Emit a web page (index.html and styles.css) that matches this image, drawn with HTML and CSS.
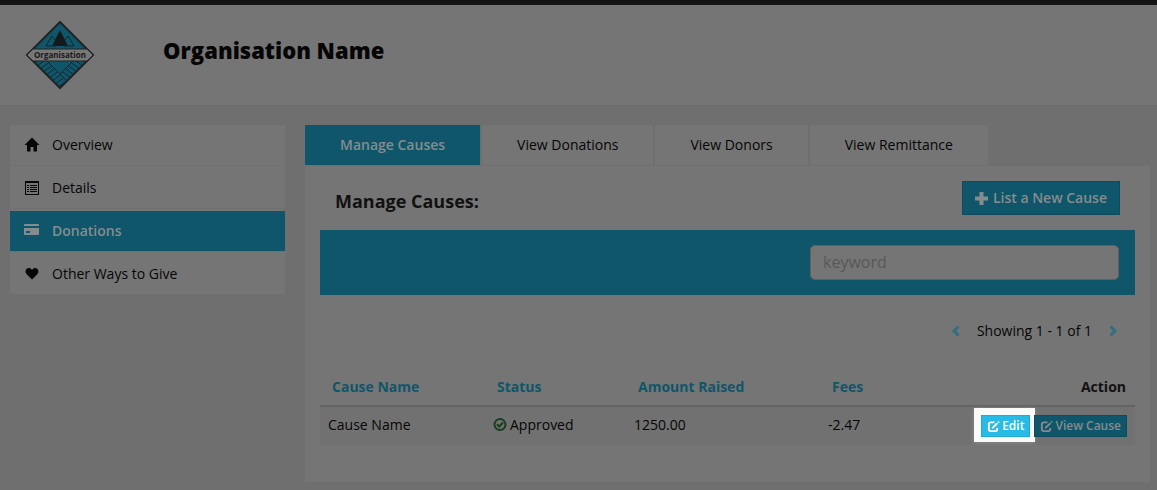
FILE: index.html
```html
<!DOCTYPE html>
<html lang="en">
<head>
<meta charset="utf-8">
<title>Organisation Name – Manage Causes</title>
<link rel="stylesheet" href="styles.css">
</head>
<body>
<svg class="symbols" aria-hidden="true">
  <symbol id="edit" viewBox="0 0 14 14"><path d="M8 2.500H4Q2 2.500 2 4.500V10Q2 12 4 12H9Q11 12 11 10V8.500" fill="none" stroke="currentColor" stroke-width="2"/><path d="M5.500 7.500 10.500 2.600 12 4.100 7 9 5 9.500zM11.300 1.800l1-1 1.500 1.500-1 1z" fill="currentColor"/></symbol>
</svg>
<header class="header">
  <svg class="logo" viewBox="0 0 68 68" role="img" aria-label="Organisation logo">
    <defs>
      <clipPath id="lower-left"><path d="M7 39H20L41 60 34 67z"/></clipPath>
      <clipPath id="lower-right"><path d="M48 39H61L41 60 34 53z"/></clipPath>
    </defs>
    <path class="logo-fill" d="M34 1 67 34 34 67 1 34z"/>
    <g class="logo-line" clip-path="url(#lower-left)">
      <path d="M4 45 19 34M7 48 22 37M10 51 25 40M13 54 28 43M16 57 31 46M19 60 34 49M22 63 37 52M25 66 40 55M28 69 43 58"/>
    </g>
    <g class="logo-line" clip-path="url(#lower-right)">
      <path d="M49 34 64 45M46 37 61 48M43 40 58 51M40 43 55 54M37 46 52 57M34 49 49 60"/>
    </g>
    <path class="logo-line" d="M20 39 41 60M48 39 34 53"/>
    <path class="logo-line" d="M30 25H20L26 15 30 20M38 25H48L42 15 38 20"/>
    <path class="logo-peak" d="M34 9 42 25H26z"/>
    <path class="logo-band" d="M7 28H61L67 34 61 40H7L1 34z"/>
    <text class="logo-text" x="34" y="37" text-anchor="middle">Organisation</text>
  </svg>
  <h1 class="org-name">Organisation Name</h1>
</header>
<div class="layout">
  <nav class="sidebar" aria-label="Organisation">
    <a class="side-link" href="#"><svg class="side-icon" viewBox="0 0 14 14"><path d="M7 -.5 14.500 7H12V13.500H8.500V9H5.500V13.500H2V7H-.5z" fill="currentColor"/></svg>Overview</a>
    <a class="side-link" href="#"><svg class="side-icon" viewBox="0 0 14 14"><path d="M0 0H14V14H0zM1 2V13H13V2z" fill="currentColor" fill-rule="evenodd"/><path d="M2 4.500H4M5 4.500H12M2 6.500H4M5 6.500H12M2 8.500H4M5 8.500H12M2 10.500H4M5 10.500H12" stroke="currentColor"/></svg>Details</a>
    <a class="side-link side-link-active" href="#" aria-current="page"><svg class="side-icon" viewBox="0 0 14 14"><path d="M-1 1Q-1 0 0 0H13Q14 0 14 1V2H-1zM-1 4H14V10Q14 11 13 11H0Q-1 11 -1 10zM1 7V9H5V7z" fill="currentColor" fill-rule="evenodd"/></svg>Donations</a>
    <a class="side-link" href="#"><svg class="side-icon" viewBox="0 0 14 14"><path d="M7 12.500 1.500 7C-.5 4.500 1 1 4 1 5.500 1 6.500 2 7 3 7.500 2 8.500 1 10 1 13 1 14.500 4.500 12.500 7z" fill="currentColor"/></svg>Other Ways to Give</a>
  </nav>
  <main class="main">
    <nav class="tabs" aria-label="Donations">
      <a class="tab tab-active" href="#" aria-current="page">Manage Causes</a>
      <a class="tab" href="#">View Donations</a>
      <a class="tab" href="#">View Donors</a>
      <a class="tab" href="#">View Remittance</a>
    </nav>
    <section class="panel">
      <div class="panel-head">
        <h2 class="panel-title">Manage Causes:</h2>
        <button class="button" type="button"><svg class="plus" viewBox="0 0 13 13"><path d="M4.500 0H8.500V4.500H13V8.500H8.500V13H4.500V8.500H0V4.500H4.500z" fill="currentColor"/></svg>List a New Cause</button>
      </div>
      <form class="search">
        <input class="search-input" type="text" placeholder="keyword" aria-label="Keyword">
      </form>
      <div class="pager">
        <button class="pager-button" type="button" aria-label="Previous page"><svg class="chevron" viewBox="0 0 8 12"><path d="M6.500 1.500 2 6 6.500 10.500"/></svg></button>
        <span>Showing 1 - 1 of 1</span>
        <button class="pager-button" type="button" aria-label="Next page"><svg class="chevron" viewBox="0 0 8 12"><path d="M1.500 1.500 6 6 1.500 10.500"/></svg></button>
      </div>
      <table class="causes">
        <colgroup><col class="col-name"><col class="col-status"><col class="col-amount"><col class="col-fees"><col></colgroup>
        <thead>
          <tr><th><a href="#">Cause Name</a></th><th><a href="#">Status</a></th><th><a href="#">Amount Raised</a></th><th><a href="#">Fees</a></th><th class="action">Action</th></tr>
        </thead>
        <tbody>
          <tr>
            <td>Cause Name</td>
            <td><span class="status"><svg class="check" viewBox="0 0 14 14"><circle cx="7" cy="6.500" r="5.500"/><path d="M4 6.300 6.300 8.500 10 4.500"/></svg>Approved</span></td>
            <td>1250.00</td>
            <td>-2.47</td>
            <td>
              <div class="actions">
                <span class="spotlight"><button class="button button-small button-lit" type="button"><svg class="edit-icon"><use href="#edit"/></svg>Edit</button></span>
                <button class="button button-small" type="button"><svg class="edit-icon"><use href="#edit"/></svg>View Cause</button>
              </div>
            </td>
          </tr>
        </tbody>
      </table>
    </section>
  </main>
</div>
</body>
</html>
```

FILE: styles.css
```css
:root {
  --page: #6f6f6f;
  --surface: #757575;
  --line: #707070;
  --accent: #0f566b;
  --accent-dark: #0d4b5d;
  --light: #868c8e;
  --ink: #060606;
}

* { box-sizing: border-box; }

body {
  margin: 0;
  background: var(--page);
  color: var(--ink);
  font: 14px/20px "Open Sans", "Noto Sans", sans-serif;
}

a { color: inherit; text-decoration: none; }
svg { display: block; flex: none; overflow: visible; }
.symbols { display: none; }

.header {
  display: flex;
  align-items: center;
  gap: 69px;
  min-height: 105px;
  padding: 0 26px;
  border-top: 5px solid #141414;
  background: var(--surface);
}

.logo { width: 68px; height: 68px; }
.logo-fill { fill: var(--accent); stroke: #202426; stroke-width: 2; }
.logo-line { fill: none; stroke: #14272d; stroke-width: 1; }
.logo-peak { fill: #141a1c; }
.logo-band { fill: #777777; stroke: #252525; stroke-width: 1; }
.logo-text { fill: #181818; font-size: 8px; font-weight: 700; }

.org-name {
  margin: 0 0 10px;
  font-size: 22px;
  line-height: 30px;
  font-weight: 800;
}

.layout {
  display: flex;
  align-items: flex-start;
  gap: 20px;
  padding: 20px 7px 8px 10px;
}

.sidebar {
  display: flex;
  flex: 0 0 275px;
  flex-direction: column;
  gap: 2px;
  background: var(--surface);
}

.side-link {
  display: flex;
  align-items: center;
  gap: 13px;
  height: 41px;
  padding: 0 15px;
  border-bottom: 1px solid var(--line);
}

.side-link:last-child { height: 40px; border: 0; }

.side-link-active {
  background: var(--accent);
  background-clip: padding-box;
  color: var(--light);
  font-weight: 600;
}

.side-icon { width: 14px; height: 14px; }

.main { flex: 1; min-width: 0; }

.tabs { display: flex; gap: 2px; }

.tab {
  padding: 10px 35px;
  background: var(--surface);
}

.tab-active {
  background: var(--accent);
  color: var(--light);
  font-weight: 600;
}

.panel {
  margin-top: 1px;
  padding: 15px 15px 37px;
  background: var(--surface);
}

.panel-head {
  display: flex;
  align-items: center;
  justify-content: space-between;
  padding: 0 15px;
}

.panel-title {
  margin: 6px 0 0;
  color: #111111;
  font-size: 18px;
  line-height: 24px;
  font-weight: 700;
}

.button {
  display: flex;
  align-items: center;
  gap: 5px;
  padding: 6px 12px;
  border: 1px solid var(--accent-dark);
  background: var(--accent);
  color: var(--light);
  font: 600 14px/20px "Open Sans", "Noto Sans", sans-serif;
}

.plus { width: 13px; height: 13px; }

.search {
  display: flex;
  justify-content: flex-end;
  margin-top: 15px;
  padding: 15px 16px;
  background: var(--accent);
}

.search-input {
  width: 309px;
  height: 35px;
  padding: 5px 12px 7px;
  border: 1px solid #606060;
  border-radius: 5px;
  background: var(--surface);
  color: var(--ink);
  font: 16px/20px "Open Sans", "Noto Sans", sans-serif;
}

.search-input::placeholder { color: #585858; opacity: 1; }

.pager {
  display: flex;
  align-items: center;
  justify-content: flex-end;
  gap: 17px;
  margin-top: 26px;
  padding-right: 18px;
}

.pager-button {
  padding: 0;
  border: 0;
  background: none;
  color: #2f6f80;
}

.chevron {
  width: 8px;
  height: 12px;
  fill: none;
  stroke: currentColor;
  stroke-width: 3;
}

.causes {
  width: 100%;
  margin-top: 28px;
  border-collapse: collapse;
  table-layout: fixed;
}

.col-name { width: 165px; }
.col-status { width: 141px; }
.col-amount { width: 194px; }
.col-fees { width: 140px; }

.causes th {
  padding: 8px 12px;
  border-bottom: 2px solid #646464;
  color: var(--accent);
  font-weight: 700;
  text-align: left;
}

.causes .action {
  padding-right: 9px;
  color: #111111;
  text-align: right;
}

.causes td {
  padding: 8px;
  background: #717171;
  vertical-align: top;
}

.status { display: flex; align-items: center; gap: 3px; }

.check {
  width: 14px;
  height: 14px;
  fill: none;
  stroke: #183f20;
  stroke-width: 2;
}

.actions { display: flex; justify-content: flex-end; gap: 4px; }

.button-small {
  gap: 2px;
  padding: 1px 5px;
  font-size: 12px;
  line-height: 18px;
}

.edit-icon { width: 13px; height: 13px; }

.spotlight {
  margin: -7px -5px -5px -7px;
  padding: 7px 5px 5px 7px;
  background: #fafafa;
  box-shadow: 0 1px 4px #8c8c8c;
}

.spotlight + .button-small { position: relative; }

.button-lit {
  border-color: #1fabd3;
  background: #29bae6;
  color: #ffffff;
}
```
